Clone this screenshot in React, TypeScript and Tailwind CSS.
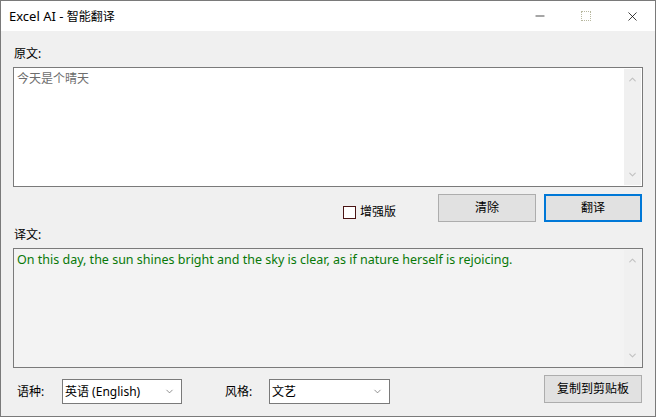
import { ChevronDown, ChevronUp, Minus, X } from 'lucide-react';

const font = "font-['Noto_Sans','Noto_Sans_CJK_SC','Microsoft_YaHei',sans-serif]";

const ScrollBar = () => (
  <div className="absolute right-[1px] top-[1px] bottom-[1px] w-[17px] bg-[#f0f0f0] flex flex-col justify-between items-center py-[5px]">
    <ChevronUp size={11} strokeWidth={2.5} className="text-[#c2c2c2]" />
    <ChevronDown size={11} strokeWidth={2.5} className="text-[#c2c2c2]" />
  </div>
);

const Select = ({ value, width }: { value: string; width: string }) => (
  <div className={`${width} h-[25px] mt-[4px] bg-white border border-[#7a7a7a] flex items-center justify-between pl-[2px] pr-[6px]`}>
    <span className="text-[12px] text-black leading-none">{value}</span>
    <ChevronDown size={11} strokeWidth={1.5} className="text-[#606060]" />
  </div>
);

export default function App() {
  return (
    <div className={`${font} w-[656px] h-[417px] border border-[#7a7a7a] flex flex-col overflow-hidden text-black`}>
      {/* title bar */}
      <div className="h-[30px] bg-white flex items-center shrink-0">
        <span className="pl-[8px] text-[12px] leading-none">
          <span className="text-[13px]">Excel AI - </span>智能翻译
        </span>
        <div className="ml-auto flex h-full">
          <div className="w-[46px] h-full flex items-center justify-center">
            <Minus size={14} strokeWidth={1.2} />
          </div>
          <div className="w-[46px] h-full flex items-center justify-center">
            <div className="w-[10px] h-[10px] border border-dotted border-[#b8b8a0]" />
          </div>
          <div className="w-[46px] h-full flex items-center justify-center">
            <X size={15} strokeWidth={1.2} />
          </div>
        </div>
      </div>

      {/* body */}
      <div className="flex-1 bg-[#f0f0f0] pl-[12px] pr-[12px] flex flex-col">
        <div className="mt-[15px] mb-[5px] h-[16px] leading-[16px] text-[12px] pl-[1px]">原文:</div>
        <div className="relative h-[120px] bg-white border border-[#7a7a7a] px-[3px] pt-[1px] leading-[16px]">
          <span className="text-[12px] text-[#6d6d6d]">今天是个晴天</span>
          <ScrollBar />
        </div>

        <div className="mt-[7px] h-[28px] flex items-center">
          <div className="ml-auto flex items-center gap-[4px] mr-[42px] mt-[8px]">
            <div className="w-[13px] h-[13px] bg-white border border-[#4a1414]" />
            <span className="text-[12px] leading-none">增强版</span>
          </div>
          <button className="w-[98px] h-[28px] bg-[#e1e1e1] border border-[#adadad] text-[12px]">清除</button>
          <button className="ml-[8px] mr-[1px] w-[98px] h-[28px] bg-[#e1e1e1] border-2 border-[#0078d7] text-[12px]">翻译</button>
        </div>

        <div className="mt-[5px] mb-[5px] h-[16px] leading-[16px] text-[12px] pl-[1px]">译文:</div>
        <div className="relative h-[120px] bg-[#f3f3f3] border border-[#7a7a7a] px-[3px] pt-[1px] leading-[16px]">
          <span className="text-[12.5px] text-[#087808]">
            On this day, the sun shines bright and the sky is clear, as if nature herself is rejoicing.
          </span>
          <ScrollBar />
        </div>

        <div className="mt-[7px] flex items-start">
          <span className="ml-[4px] mt-[4px] h-[25px] leading-[25px] text-[12px] w-[45px]">语种:</span>
          <Select value="英语 (English)" width="w-[120px]" />
          <span className="ml-[43px] mt-[4px] h-[25px] leading-[25px] text-[12px] w-[44px]">风格:</span>
          <Select value="文艺" width="w-[121px]" />
          <button className="ml-auto mr-[1px] w-[98px] h-[28px] bg-[#e1e1e1] border border-[#adadad] text-[12px]">复制到剪贴板</button>
        </div>
      </div>
    </div>
  );
}
